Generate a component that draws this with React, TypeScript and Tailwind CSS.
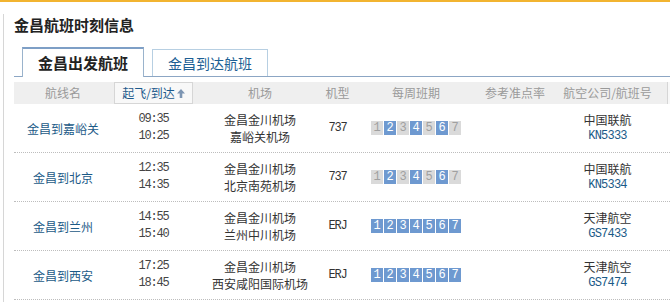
import React from 'react';

interface Flight {
  route: string;
  dep: string;
  arr: string;
  from: string;
  to: string;
  plane: string;
  days: number[];
  airline: string;
  no: string;
}

const flights: Flight[] = [
  { route: '金昌到嘉峪关', dep: '09:35', arr: '10:25', from: '金昌金川机场', to: '嘉峪关机场', plane: '737', days: [2, 4, 6], airline: '中国联航', no: 'KN5333' },
  { route: '金昌到北京', dep: '12:35', arr: '14:35', from: '金昌金川机场', to: '北京南苑机场', plane: '737', days: [2, 4, 6], airline: '中国联航', no: 'KN5334' },
  { route: '金昌到兰州', dep: '14:55', arr: '15:40', from: '金昌金川机场', to: '兰州中川机场', plane: 'ERJ', days: [1, 2, 3, 4, 5, 6, 7], airline: '天津航空', no: 'GS7433' },
  { route: '金昌到西安', dep: '17:25', arr: '18:45', from: '金昌金川机场', to: '西安咸阳国际机场', plane: 'ERJ', days: [1, 2, 3, 4, 5, 6, 7], airline: '天津航空', no: 'GS7474' },
];

const cjk = "font-['Noto_Sans_CJK_SC','Noto_Sans',sans-serif]";
const mono = "font-['Liberation_Mono',monospace]";

const App: React.FC = () => {
  return (
    <div className={`w-[670px] h-[302px] overflow-hidden bg-white text-[#333] ${cjk}`}>
      {/* top accent */}
      <div className="h-[2px] bg-[#f2b430]" />

      <div className="ml-[3px] h-[300px] border-l border-[#d6d6d6] pl-[10px]">
        {/* Title */}
        <h2 className="mt-[12px] h-[22px] text-[15px] font-bold leading-[22px] text-[#222]">金昌航班时刻信息</h2>

        {/* Tabs */}
        <div className="mt-[11px] flex h-[30px] items-end gap-[8px] border-b border-[#8ca6c4] pl-[8px]">
          <div className="-mb-px flex h-[30px] w-[122px] items-center justify-center border-x border-t-2 border-x-[#9ab3cc] border-t-[#7e9fc6] bg-white text-[15px] font-bold text-[#222]">
            金昌出发航班
          </div>
          <div className="flex h-[27px] w-[116px] items-center justify-center border-x border-t border-[#b7cfe2] bg-white text-[14px] text-[#1d5f94]">
            金昌到达航班
          </div>
        </div>

        {/* Table header */}
        <div className="mt-[5px] flex h-[22px] items-center bg-[#efefef] text-[12px] text-[#9a9a9a]">
          <div className="w-[98px] text-center">航线名</div>
          <div className="flex h-[22px] w-[83px] justify-center px-[2px]">
            <div className="flex h-[22px] w-full items-center justify-center gap-[2px] border border-[#d6d6d6] bg-[#f8f8f8] text-[#1d5a8c]">
              <span>起飞/到达</span>
              <svg width="8" height="9" viewBox="0 0 8 9" className="mt-[1px]">
                <path d="M4 0 L8 4.5 H5.3 V9 H2.7 V4.5 H0 Z" fill="#7d96b3" />
              </svg>
            </div>
          </div>
          <div className="w-[130px] text-center">机场</div>
          <div className="w-[25px] text-center">机型</div>
          <div className="w-[132px] text-center">每周班期</div>
          <div className="w-[66px] text-center">参考准点率</div>
          <div className="w-[119px] text-center">航空公司/航班号</div>
          <div className="h-[22px] flex-1 border-l border-[#d6d6d6] bg-[#f8f8f8]" />
        </div>

        {/* Rows */}
        {flights.map(f => (
          <div key={f.no} className="flex h-[49px] items-center border-b border-dotted border-[#bdbdbd] text-[12px] leading-[17px]">
            <div className="w-[98px] text-center text-[#1b5a87]">{f.route}</div>
            <div className={`w-[83px] text-center text-[12px] tracking-[-1.2px] text-[#444] ${mono}`}>
              <div>{f.dep}</div>
              <div>{f.arr}</div>
            </div>
            <div className="w-[130px] text-center">
              <div>{f.from}</div>
              <div>{f.to}</div>
            </div>
            <div className={`w-[25px] text-center text-[12px] tracking-[-1.2px] ${mono}`}>{f.plane}</div>
            <div className="flex w-[132px] justify-center gap-[1px]">
              {[1, 2, 3, 4, 5, 6, 7].map(d => (
                <span
                  key={d}
                  className={`flex h-[14px] w-[12px] items-center justify-center text-[12px] leading-none ${mono} ${
                    f.days.includes(d) ? 'bg-[#6e99d0] text-white' : 'bg-[#dadada] text-[#a0a0a0]'
                  }`}
                >
                  {d}
                </span>
              ))}
            </div>
            <div className="w-[66px]" />
            <div className="w-[119px] text-center">
              <div>{f.airline}</div>
              <div className={`text-[12px] tracking-[-0.8px] text-[#1b5a87] ${mono}`}>{f.no}</div>
            </div>
          </div>
        ))}
      </div>
    </div>
  );
};

export default App;
